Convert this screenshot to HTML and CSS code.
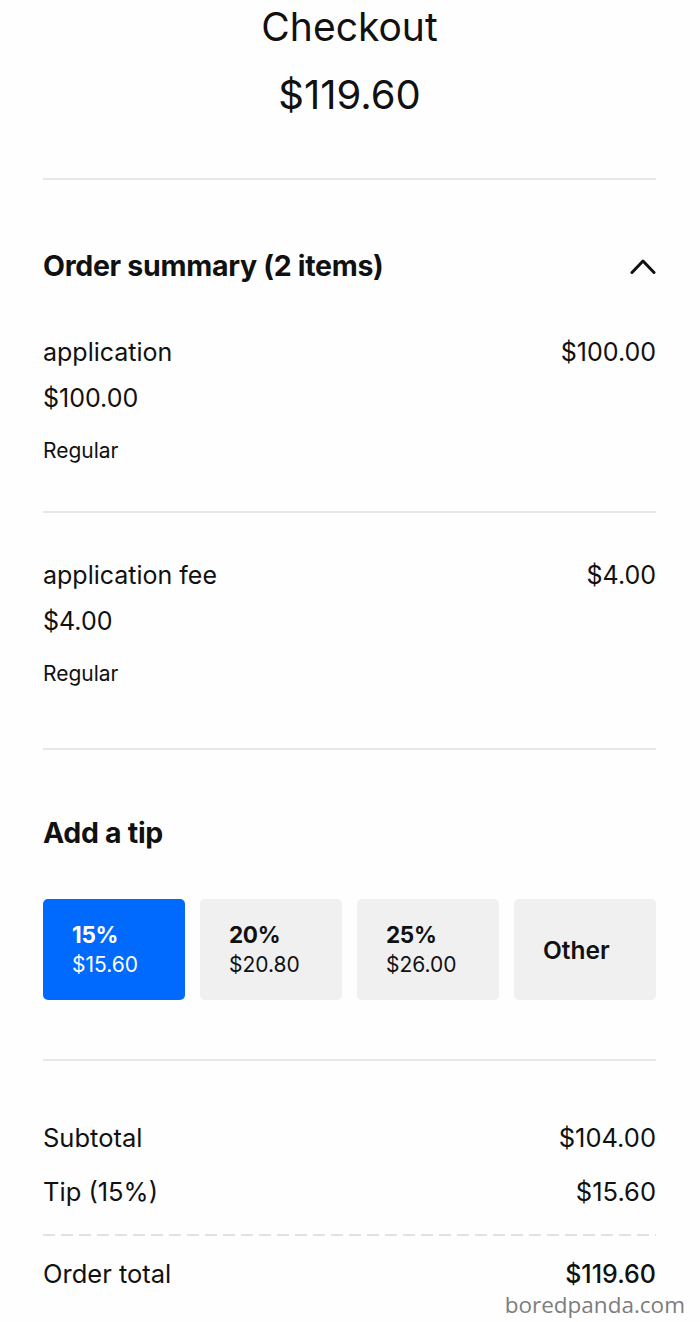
FILE: index.html
```html
<!DOCTYPE html>
<html lang="en">
<head>
<meta charset="utf-8">
<title>Checkout</title>
<link rel="stylesheet" href="styles.css">
</head>
<body>
<div class="page">
  <header class="header">
    <h1 class="title">Checkout</h1>
    <div class="amount">$119.60</div>
  </header>
  <div class="divider"></div>

  <section class="summary">
    <div class="summary-head">
      <h2 class="section-title">Order summary (2 items)</h2>
      <svg class="chevron" width="26" height="16" viewBox="0 0 26 16" aria-hidden="true">
        <polyline points="2,14.5 13,3 24,14.5" fill="none" stroke="#111" stroke-width="3" stroke-linecap="round" stroke-linejoin="round"/>
      </svg>
    </div>

    <div class="item item-first">
      <div class="item-row">
        <span class="item-name">application</span>
        <span class="item-price">$100.00</span>
      </div>
      <div class="item-sub">$100.00</div>
      <div class="item-variant">Regular</div>
    </div>
  </section>
  <div class="divider"></div>

  <section class="item item-second">
    <div class="item-row">
      <span class="item-name">application fee</span>
      <span class="item-price">$4.00</span>
    </div>
    <div class="item-sub">$4.00</div>
    <div class="item-variant">Regular</div>
  </section>
  <div class="divider"></div>

  <section class="tip">
    <h2 class="section-title">Add a tip</h2>
    <div class="tip-options">
      <button class="tip-btn selected"><span class="tip-pct">15%</span><span class="tip-amt">$15.60</span></button>
      <button class="tip-btn"><span class="tip-pct">20%</span><span class="tip-amt">$20.80</span></button>
      <button class="tip-btn"><span class="tip-pct">25%</span><span class="tip-amt">$26.00</span></button>
      <button class="tip-btn other"><span class="tip-pct">Other</span></button>
    </div>
  </section>
  <div class="divider"></div>

  <section class="totals">
    <div class="total-row"><span>Subtotal</span><span>$104.00</span></div>
    <div class="total-row"><span>Tip (15%)</span><span>$15.60</span></div>
    <div class="dashed"></div>
    <div class="total-row grand"><span>Order total</span><span class="grand-amt">$119.60</span></div>
  </section>
</div>
<div class="watermark">boredpanda.com</div>
</body>
</html>
```

FILE: styles.css
```css
* { box-sizing: border-box; }
html, body {
  margin: 0;
  padding: 0;
  background: #fefefe;
}
body {
  font-family: Inter, "Liberation Sans", sans-serif;
  color: #111;
  width: 700px;
  height: 1322px;
  overflow: hidden;
  position: relative;
}
.page {
  padding: 0 44px 0 43px;
}
.header {
  padding-top: 5px;
  padding-bottom: 61px;
  text-align: center;
}
.title {
  margin: 0;
  font-size: 39px;
  font-weight: 400;
  line-height: 44px;
}
.amount {
  margin-top: 24px;
  font-size: 40px;
  line-height: 44px;
}
.divider {
  height: 2px;
  background: #e8e8e8;
}
.summary {
  padding-top: 70px;
  padding-bottom: 46px;
}
.summary-head {
  display: flex;
  justify-content: space-between;
  align-items: center;
  height: 32px;
}
.section-title {
  margin: 0;
  font-size: 28.5px;
  font-weight: 700;
  line-height: 32px;
  letter-spacing: -0.3px;
}
.item-first {
  margin-top: 47px;
}
.item-second {
  padding-top: 39px;
  padding-bottom: 60px;
}
.item-row {
  display: flex;
  justify-content: space-between;
  font-size: 25px;
  line-height: 46px;
}
.item-sub {
  font-size: 25px;
  line-height: 46px;
}
.item-variant {
  margin-top: 16px;
  font-size: 21px;
  line-height: 28px;
}
.tip {
  padding-top: 67px;
  padding-bottom: 59px;
}
.tip-options {
  margin-top: 50px;
  display: grid;
  grid-template-columns: repeat(4, 1fr);
  gap: 15px;
}
.tip-btn {
  height: 101px;
  border: none;
  border-radius: 5px;
  background: #f0f0f0;
  color: #111;
  font-family: inherit;
  text-align: left;
  padding: 0 0 0 29px;
  display: flex;
  flex-direction: column;
  justify-content: center;
}
.tip-btn.selected {
  background: #006aff;
  color: #fff;
}
.tip-pct {
  font-size: 22.5px;
  font-weight: 700;
  line-height: 30px;
  letter-spacing: -0.3px;
}
.tip-amt {
  font-size: 21px;
  line-height: 30px;
}
.other .tip-pct {
  font-weight: 600;
  font-size: 24.5px;
  letter-spacing: 0;
}
.totals {
  padding-top: 50px;
}
.total-row {
  display: flex;
  justify-content: space-between;
  font-size: 25.5px;
  line-height: 54px;
}
.total-row.grand {
  line-height: 28px;
}
.dashed {
  margin-top: 15px;
  margin-bottom: 24px;
  height: 2px;
  background: repeating-linear-gradient(to right, #e2e2e2 0 12px, transparent 12px 18px);
}
.grand-amt {
  font-weight: 500;
  font-size: 25px;
}
.watermark {
  position: absolute;
  right: 15px;
  top: 1294px;
  font-family: "Open Sans", "DejaVu Sans", sans-serif;
  font-size: 22.5px;
  line-height: 22px;
  color: #7d7d7d;
}
```
